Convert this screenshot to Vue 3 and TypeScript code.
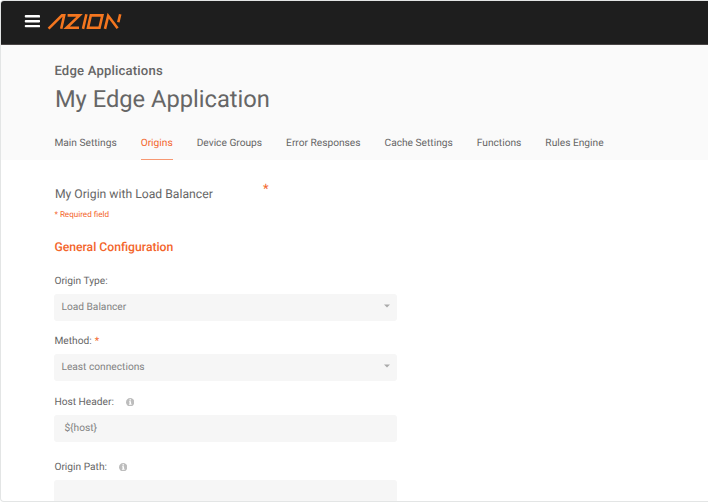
<script setup lang="ts">
interface Tab { label: string; active?: boolean }
interface Field { label: string; value: string; kind: 'select' | 'input'; required?: boolean; info?: boolean }

const tabs: Tab[] = [
  { label: 'Main Settings' },
  { label: 'Origins', active: true },
  { label: 'Device Groups' },
  { label: 'Error Responses' },
  { label: 'Cache Settings' },
  { label: 'Functions' },
  { label: 'Rules Engine' },
]

const fields: Field[] = [
  { label: 'Origin Type:', value: 'Load Balancer', kind: 'select' },
  { label: 'Method:', value: 'Least connections', kind: 'select', required: true },
  { label: 'Host Header:', value: '${host}', kind: 'input', info: true },
  { label: 'Origin Path:', value: '', kind: 'input', info: true },
]
</script>

<template>
  <div class="window">
    <header class="topbar">
      <svg class="burger" width="16" height="14" viewBox="0 0 16 14">
        <path d="M1.9 2.3H15.1M1.9 7.2H15.1M1.9 12.1H15.1" />
      </svg>
      <svg class="logo" width="76" height="18" viewBox="47 13 76 18">
        <path d="M48.6 28.6L62 15.4H64.2L61.2 28.8" />
        <path d="M67.6 15.4H79.6L66.6 27.8H79" />
        <path d="M86.4 14.2L83 28.9" />
        <path d="M90.8 15.4H102.4L99.5 27.8H88Z" />
        <path d="M105 28.9L108.2 15.8L117.6 28.2M120.2 14.2L118.3 22.3" />
      </svg>
    </header>

    <section class="head">
      <div class="product">Edge Applications</div>
      <h1 class="title">My Edge Application</h1>
      <nav class="tabs">
        <a v-for="tab in tabs" :key="tab.label" class="tab" :class="{ active: tab.active }">{{ tab.label }}</a>
      </nav>
    </section>

    <main class="content">
      <div class="name-row">
        <span class="name">My Origin with Load Balancer</span>
        <span class="name-star">*</span>
      </div>
      <div class="required-note">* Required field</div>
      <h2 class="section-title">General Configuration</h2>

      <div v-for="field in fields" :key="field.label" class="field" :class="{ 'has-info': field.info }">
        <div class="label">
          <span>{{ field.label }}</span>
          <span v-if="field.required" class="star">*</span>
          <svg v-if="field.info" class="info" width="8.4" height="8.4" viewBox="0 0 8 8">
            <circle cx="4" cy="4" r="4" />
            <path d="M3.3 1.3H4.8V2.5H3.3ZM2.9 3.2H4.8V5.6H5.4V6.5H2.8V5.6H3.4V4.1H2.9Z" />
          </svg>
        </div>
        <div class="control" :class="field.kind">
          <span>{{ field.value }}</span>
          <svg v-if="field.kind === 'select'" class="caret" width="6" height="4" viewBox="0 0 6 4">
            <path d="M0 .4H6L3 3.4Z" />
          </svg>
        </div>
      </div>
    </main>
  </div>
</template>

<style>
body {
  margin: 0;
  background: #fff;
  overflow: hidden;
}
</style>

<style scoped>
.window {
  box-sizing: border-box;
  width: 708px;
  height: 502px;
  overflow: hidden;
  border: 1px solid #e3e5e5;
  border-right: 0;
  border-radius: 4px 0 0 4px;
  background: #fff;
  font-family: Roboto, sans-serif;
  font-size: 10.2px;
  color: #666;
  text-rendering: geometricPrecision;
}
.topbar {
  box-sizing: border-box;
  display: flex;
  height: 44px;
  padding: 12px 0 0 23px;
  background: #1e1e1e;
  border-bottom: 1px solid #494545;
}
.burger {
  margin-top: 1px;
}
.burger path {
  stroke: #fff;
  stroke-width: 2.4;
  stroke-linecap: round;
}
.logo {
  margin-left: 7px;
}
.logo path {
  fill: none;
  stroke: #f4761f;
  stroke-width: 2.6;
}
.head {
  box-sizing: border-box;
  height: 115px;
  padding: 18px 0 0 53.4px;
  background: #fafafa;
}
.product {
  height: 18px;
  line-height: 18px;
  font-size: 13.1px;
  font-weight: 500;
  letter-spacing: 0.18px;
}
.title {
  margin: 2px 0 0 0.5px;
  height: 32px;
  line-height: 32px;
  font-size: 23.7px;
  font-weight: 400;
}
.tabs {
  display: flex;
  gap: 24px;
  margin-top: 19px;
}
.tab {
  box-sizing: border-box;
  height: 26px;
  line-height: 20px;
  white-space: nowrap;
}
.tab.active {
  color: #f3652b;
  border-bottom: 1px solid #f79872;
}
.content {
  padding: 25px 0 0 53.4px;
}
.name-row {
  display: flex;
  height: 20px;
  line-height: 18px;
}
.name {
  width: 208px;
  padding-left: 0.5px;
  font-size: 12.2px;
}
.name-star {
  margin-top: -4px;
  font-size: 13px;
  color: #f3652b;
}
.required-note {
  height: 20px;
  line-height: 18px;
  font-size: 8.1px;
  color: #f3652b;
}
.section-title {
  margin: 13px 0 14.9px;
  height: 18px;
  line-height: 18px;
  font-size: 12.2px;
  font-weight: 500;
  color: #f3652b;
}
.field {
  height: 60.5px;
}
.field.has-info {
  height: 65px;
}
.label {
  display: flex;
  align-items: center;
  height: 20.6px;
  margin-bottom: 2.4px;
}
.star {
  margin-left: 3px;
  color: #f3652b;
}
.info {
  margin-left: 12px;
}
.info circle {
  fill: #bdbdbd;
}
.info path {
  fill: #fff;
}
.control {
  box-sizing: border-box;
  display: flex;
  justify-content: space-between;
  width: 342.3px;
  height: 27px;
  padding: 0 7px;
  line-height: 28px;
  border-radius: 3px;
  background: #f6f6f6;
  color: #828282;
}
.control.input {
  padding-left: 10px;
}
.caret {
  margin-top: 10px;
}
.caret path {
  fill: #aaa;
}
</style>
